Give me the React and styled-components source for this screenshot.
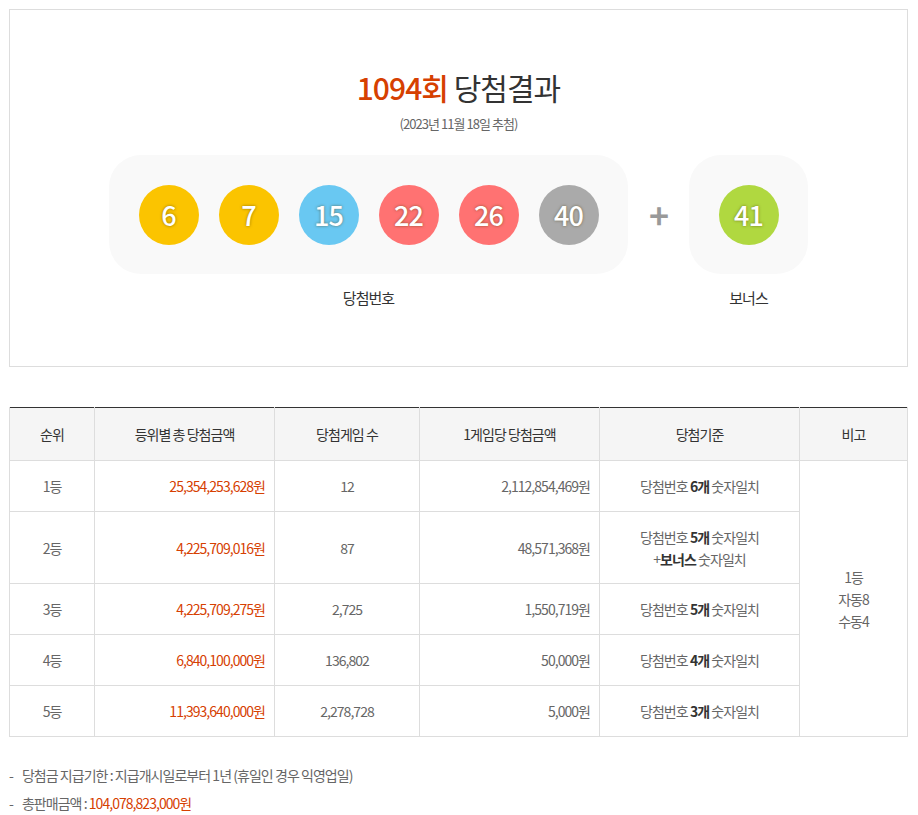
import React from "react";
import styled, { createGlobalStyle } from "styled-components";

const GlobalStyle = createGlobalStyle`
  body {
    margin: 0;
    background: #fff;
    font-family: "Noto Sans CJK KR", "Noto Sans", sans-serif;
    color: #333;
    letter-spacing: -0.06em;
  }
`;

const balls = [6, 7, 15, 22, 26, 40];
const ballColor = (n) =>
  n <= 10 ? "#fbc400" : n <= 20 ? "#69c8f2" : n <= 30 ? "#ff7272" : n <= 40 ? "#aaaaaa" : "#b0d840";

const rows = [
  ["1등", "25,354,253,628원", "12", "2,112,854,469원", "6"],
  ["2등", "4,225,709,016원", "87", "48,571,368원", "5", true],
  ["3등", "4,225,709,275원", "2,725", "1,550,719원", "5"],
  ["4등", "6,840,100,000원", "136,802", "50,000원", "4"],
  ["5등", "11,393,640,000원", "2,278,728", "5,000원", "3"],
];

const App = () => (
  <Page>
    <GlobalStyle />
    <ResultBox>
      <Title>
        <strong>1094회</strong> 당첨결과
      </Title>
      <DateText>(2023년 11월 18일 추첨)</DateText>
      <BallRow>
        <Group>
          <Panel $w={519}>
            {balls.map((n) => (
              <Ball key={n} $color={ballColor(n)}>{n}</Ball>
            ))}
          </Panel>
          <Label>당첨번호</Label>
        </Group>
        <Plus>+</Plus>
        <Group>
          <Panel $w={119}>
            <Ball $color={ballColor(41)}>41</Ball>
          </Panel>
          <Label>보너스</Label>
        </Group>
      </BallRow>
    </ResultBox>

    <Table>
      <colgroup>
        <col style={{ width: 85 }} />
        <col style={{ width: 180 }} />
        <col style={{ width: 145 }} />
        <col style={{ width: 180 }} />
        <col style={{ width: 200 }} />
        <col />
      </colgroup>
      <thead>
        <tr>
          <Th>순위</Th>
          <Th>등위별 총 당첨금액</Th>
          <Th>당첨게임 수</Th>
          <Th>1게임당 당첨금액</Th>
          <Th>당첨기준</Th>
          <Th>비고</Th>
        </tr>
      </thead>
      <tbody>
        {rows.map((r, i) => (
          <tr key={r[0]}>
            <Td $h={r[5] ? 72 : 50}>{r[0]}</Td>
            <Td $right $red>{r[1]}</Td>
            <Td>{r[2]}</Td>
            <Td $right>{r[3]}</Td>
            <Td>
              당첨번호 <b>{r[4]}개</b> 숫자일치
              {r[5] && (
                <>
                  <br />+<b>보너스</b> 숫자일치
                </>
              )}
            </Td>
            {i === 0 && (
              <Td rowSpan={5}>
                1등<br />자동8<br />수동4
              </Td>
            )}
          </tr>
        ))}
      </tbody>
    </Table>

    <Notes>
      <li>당첨금 지급기한 : 지급개시일로부터 1년 (휴일인 경우 익영업일)</li>
      <li>
        총판매금액 : <em>104,078,823,000원</em>
      </li>
    </Notes>
  </Page>
);

const Page = styled.div`
  padding: 9px 10px 0 9px;
  width: 899px;
`;

const ResultBox = styled.div`
  border: 1px solid #ddd;
  height: 358px;
  box-sizing: border-box;
  display: flex;
  flex-direction: column;
  align-items: center;
  padding-top: 56px;
`;

const Title = styled.h2`
  margin: 0;
  font-size: 30px;
  font-weight: 400;
  line-height: 42px;
  color: #333;
  strong {
    color: #d64001;
    font-weight: 500;
  }
`;

const DateText = styled.p`
  margin: 6px 0 0;
  font-size: 13px;
  color: #666;
`;

const BallRow = styled.div`
  display: flex;
  align-items: flex-start;
  margin-top: 22px;
`;

const Group = styled.div`
  display: flex;
  flex-direction: column;
  align-items: center;
`;

const Panel = styled.div`
  width: ${(p) => p.$w}px;
  height: 119px;
  background: #f9f9f9;
  border-radius: 32px;
  display: flex;
  align-items: center;
  justify-content: center;
  gap: 20px;
`;

const Ball = styled.span`
  width: 60px;
  height: 60px;
  border-radius: 50%;
  background: ${(p) => p.$color};
  color: #fff;
  font-size: 27px;
  font-weight: 500;
  display: flex;
  align-items: center;
  justify-content: center;
  text-shadow: 0 0 3px rgba(73, 57, 0, 0.6);
`;

const Plus = styled.span`
  width: 61px;
  height: 119px;
  display: flex;
  align-items: center;
  justify-content: center;
  font-size: 34px;
  font-weight: 700;
  color: #999;
`;

const Label = styled.span`
  margin-top: 13px;
  font-size: 15px;
  color: #333;
`;

const Table = styled.table`
  margin-top: 40px;
  width: 100%;
  border-collapse: collapse;
  table-layout: fixed;
  border-top: 1px solid #333;
  font-size: 14px;
`;

const Th = styled.th`
  height: 50px;
  background: #f5f5f5;
  font-weight: 400;
  color: #333;
  border: 1px solid #ddd;
  border-top: none;
`;

const Td = styled.td`
  height: ${(p) => (p.$h ? p.$h - 1 : 50)}px;
  border: 1px solid #ddd;
  text-align: ${(p) => (p.$right ? "right" : "center")};
  padding: ${(p) => (p.$right ? "0 9px 0 0" : "0")};
  color: ${(p) => (p.$red ? "#d64001" : "#666")};
  line-height: 22px;
  b {
    color: #333;
    font-weight: 700;
  }
`;

const Notes = styled.ul`
  list-style: none;
  margin: 24px 0 0;
  padding: 0;
  font-size: 14px;
  color: #666;
  li {
    line-height: 28px;
  }
  li::before {
    content: "-";
    margin-right: 9px;
  }
  em {
    font-style: normal;
    color: #d64001;
  }
`;

export default App;
